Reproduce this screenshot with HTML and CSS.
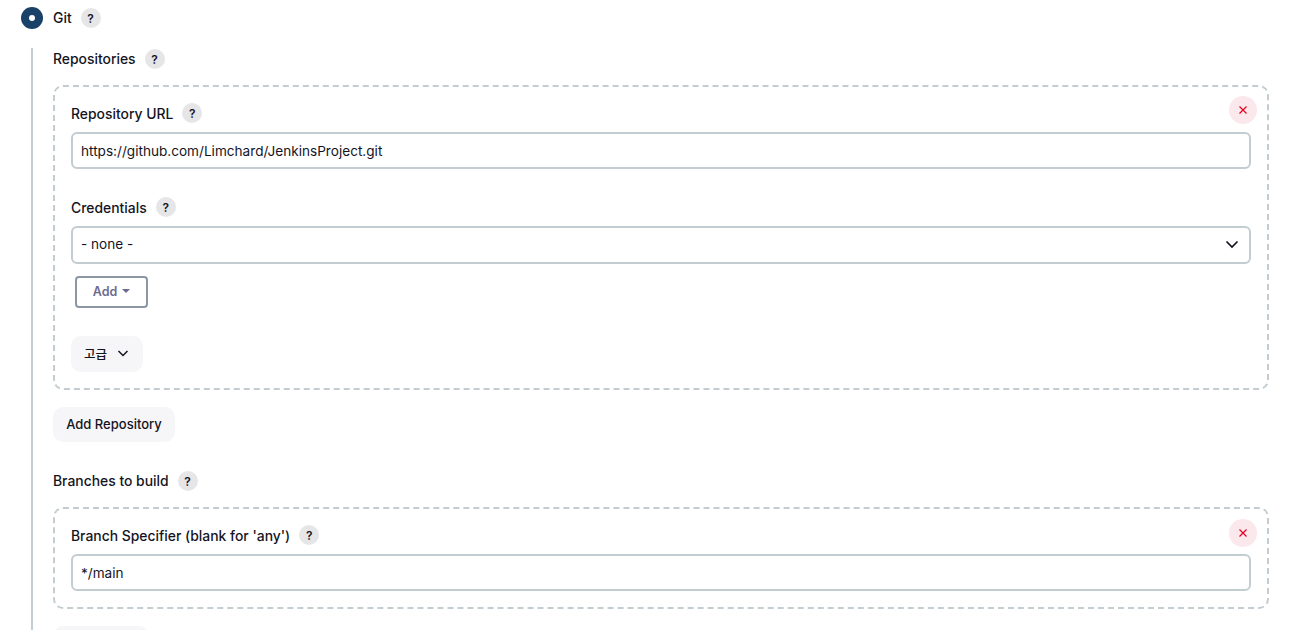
FILE: index.html
```html
<!DOCTYPE html>
<html lang="en">
<head>
    <meta charset="UTF-8">
    <meta name="viewport" content="width=device-width, initial-scale=1.0">
    <title>Source Code Management</title>
    <link rel="stylesheet" href="styles.css">
</head>
<body>
<div class="radio-row">
    <span class="radio"><span class="radio-dot"></span></span>
    <span class="label">Git</span>
    <span class="help">?</span>
</div>

<div class="nested">
    <div class="label-row first-row">
        <span class="label">Repositories</span>
        <span class="help">?</span>
    </div>

    <div class="repeated repo-box">
        <button class="delete-btn" aria-label="Delete">
            <svg width="12" height="12" viewBox="0 0 12 12"><path d="M2.5 2.5l7 7M9.5 2.5l-7 7"/></svg>
        </button>
        <div class="label-row">
            <span class="label">Repository URL</span>
            <span class="help">?</span>
        </div>
        <input class="input-field" type="text" value="https://github.com/Limchard/JenkinsProject.git">

        <div class="label-row credentials-row">
            <span class="label">Credentials</span>
            <span class="help">?</span>
        </div>
        <div class="select-field">
            <span>- none -</span>
            <svg class="select-arrow" width="14" height="14" viewBox="0 0 14 14"><path d="M1.5 4.5L7 10l5.500-5.500"/></svg>
        </div>
        <button class="add-btn">Add <span class="caret"></span></button>
        <button class="btn advanced-btn">
            <span>고급</span>
            <svg width="12" height="12" viewBox="0 0 12 12"><path d="M1.5 4L6 8.5 10.500 4"/></svg>
        </button>
    </div>

    <button class="btn add-repo-btn">Add Repository</button>

    <div class="label-row branches-row">
        <span class="label">Branches to build</span>
        <span class="help">?</span>
    </div>

    <div class="repeated branch-box">
        <button class="delete-btn" aria-label="Delete">
            <svg width="12" height="12" viewBox="0 0 12 12"><path d="M2.5 2.5l7 7M9.5 2.5l-7 7"/></svg>
        </button>
        <div class="label-row">
            <span class="label">Branch Specifier (blank for 'any')</span>
            <span class="help">?</span>
        </div>
        <input class="input-field branch-input" type="text" value="*/main">
    </div>

    <button class="btn add-branch-btn" aria-label="Add Branch"></button>
</div>
</body>
</html>
```

FILE: styles.css
```css
* {
    box-sizing: border-box;
}
html, body {
    height: 630px;
    overflow: hidden;
}
body {
    margin: 0;
    padding: 7px 29px 0 21px;
    background-color: #fff;
    color: #14141f;
    font-family: Inter, "Noto Sans CJK KR", sans-serif;
    font-size: 14px;
}
.radio-row {
    display: flex;
    align-items: center;
    height: 22px;
}
.radio {
    width: 22px;
    height: 22px;
    border-radius: 50%;
    background-color: #1a4167;
    display: flex;
    justify-content: center;
    align-items: center;
    margin-right: 10px;
}
.radio-dot {
    width: 6px;
    height: 6px;
    border-radius: 50%;
    background-color: #fff;
}
.label {
    font-size: 13.9px;
    font-weight: 500;
    line-height: 20px;
}
.repeated .label {
    padding-top: 2px;
}
.help {
    width: 20px;
    height: 20px;
    margin-left: 9px;
    border-radius: 50%;
    background-color: #e6e6e8;
    display: flex;
    justify-content: center;
    align-items: center;
    font-size: 12px;
    font-weight: 600;
}
.nested {
    margin: 19px 0 0 10px;
    padding: 1px 0 0 20px;
    border-left: 2px solid #c3ccd1;
    height: 600px;
}
.label-row {
    display: flex;
    align-items: center;
    height: 20px;
}
.repeated {
    position: relative;
    border: 2px dashed #c3ccd1;
    border-radius: 10px;
    padding: 16px;
}
.repo-box {
    margin-top: 16px;
    height: 305px;
}
.branch-box {
    margin-top: 16px;
    height: 102px;
}
.delete-btn {
    position: absolute;
    top: 9px;
    right: 10px;
    width: 28px;
    height: 28px;
    padding: 0;
    border: none;
    border-radius: 50%;
    background-color: #fbe8ec;
    display: flex;
    justify-content: center;
    align-items: center;
}
.branch-box .delete-btn {
    top: 10px;
}
.delete-btn path {
    fill: none;
    stroke: #e6001f;
    stroke-width: 1.2;
}
.input-field, .select-field {
    display: flex;
    align-items: center;
    width: 100%;
    height: 37px;
    margin-top: 9px;
    padding: 0 8px;
    border: 2px solid #c3ccd1;
    border-radius: 6px;
    background-color: #fff;
    color: #14141f;
    font-family: inherit;
    font-size: 13.6px;
    outline: none;
}
.credentials-row {
    margin-top: 28px;
}
.select-field {
    justify-content: space-between;
    height: 38px;
    padding-right: 10px;
    padding-bottom: 2px;
}
.select-arrow path {
    fill: none;
    stroke: #14141f;
    stroke-width: 1.7;
}
.add-btn {
    display: flex;
    align-items: center;
    justify-content: center;
    gap: 5px;
    width: 73px;
    height: 32px;
    margin: 12px 0 0 4px;
    padding: 0 0 2px;
    border: 2px solid #8d96a3;
    border-radius: 4px;
    background-color: #fff;
    color: #6d6b8d;
    font-family: inherit;
    font-size: 12.5px;
    font-weight: 600;
}
.caret {
    border-left: 4px solid transparent;
    border-right: 4px solid transparent;
    border-top: 4px solid #6d6b8d;
}
.btn {
    display: flex;
    align-items: center;
    border: none;
    border-radius: 10px;
    background-color: #f6f6f8;
    color: #14141f;
    font-family: inherit;
    font-size: 13px;
    font-weight: 500;
}
.advanced-btn {
    gap: 10px;
    width: 72px;
    height: 36px;
    margin-top: 28px;
    padding: 0 0 2px 13px;
    font-size: 12.5px;
}
.advanced-btn path {
    fill: none;
    stroke: #14141f;
    stroke-width: 1.5;
}
.add-repo-btn {
    justify-content: center;
    width: 122px;
    height: 35px;
    margin-top: 17px;
    padding: 0 0 2px;
}
.branches-row {
    margin-top: 29px;
}
.branch-input {
    margin-top: 9px;
}
.add-branch-btn {
    width: 96px;
    height: 35px;
    margin-top: 17px;
    padding: 0;
}
```
